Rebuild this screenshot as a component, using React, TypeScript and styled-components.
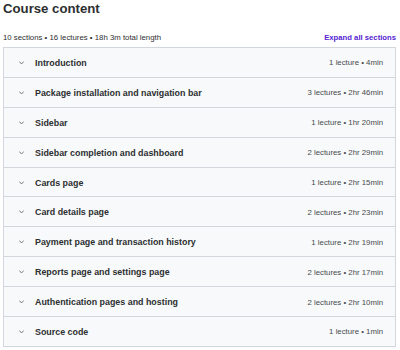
import React from 'react';
import styled, {createGlobalStyle} from 'styled-components';

const GlobalStyle = createGlobalStyle`
  html, body {
    margin: 0;
    padding: 0;
    background: #ffffff;
  }
  body {
    font-family: 'Liberation Sans', Arial, sans-serif;
    color: #2d2f31;
  }
`;

type Section = {
  title: string;
  lectures: number;
  length: string;
};

const sections: Section[] = [
  {title: 'Introduction', lectures: 1, length: '4min'},
  {title: 'Package installation and navigation bar', lectures: 3, length: '2hr 46min'},
  {title: 'Sidebar', lectures: 1, length: '1hr 20min'},
  {title: 'Sidebar completion and dashboard', lectures: 2, length: '2hr 29min'},
  {title: 'Cards page', lectures: 1, length: '2hr 15min'},
  {title: 'Card details page', lectures: 2, length: '2hr 23min'},
  {title: 'Payment page and transaction history', lectures: 1, length: '2hr 19min'},
  {title: 'Reports page and settings page', lectures: 2, length: '2hr 17min'},
  {title: 'Authentication pages and hosting', lectures: 2, length: '2hr 10min'},
  {title: 'Source code', lectures: 1, length: '1min'},
];

export default function App() {
  return (
    <Page>
      <GlobalStyle />
      <Title>Course content</Title>
      <SummaryBar>
        <Summary>10 sections • 16 lectures • 18h 3m total length</Summary>
        <ExpandButton>Expand all sections</ExpandButton>
      </SummaryBar>
      <Panel>
        {sections.map(s => (
          <SectionRow key={s.title}>
            <Chevron width="5" height="4" viewBox="0 0 5 4">
              <polyline points="0.5,0.8 2.5,3 4.5,0.8" />
            </Chevron>
            <SectionTitle>{s.title}</SectionTitle>
            <SectionMeta>
              {s.lectures} {s.lectures === 1 ? 'lecture' : 'lectures'} • {s.length}
            </SectionMeta>
          </SectionRow>
        ))}
      </Panel>
    </Page>
  );
}

const Page = styled.div`
  width: 400px;
  padding: 0 4px 0 3px;
  box-sizing: border-box;
`;

const Title = styled.h2`
  margin: 0;
  padding-top: 1px;
  font-size: 13.2px;
  line-height: 16px;
  font-weight: 700;
  color: #2d2f31;
`;

const SummaryBar = styled.div`
  display: flex;
  align-items: center;
  justify-content: space-between;
  margin-top: 12px;
  height: 16px;
  margin-bottom: 2px;
`;

const Summary = styled.span`
  font-size: 7.8px;
  color: #2d2f31;
`;

const ExpandButton = styled.span`
  font-size: 7.7px;
  font-weight: 700;
  color: #5624d0;
`;

const Panel = styled.div`
  border: 1px solid #d1d7dc;
  border-bottom: none;
  background: #f7f9fa;
`;

const SectionRow = styled.div`
  display: flex;
  align-items: center;
  height: 29.9px;
  box-sizing: border-box;
  border-bottom: 1px solid #d1d7dc;
  padding: 1px 12px 0 15px;
`;

const Chevron = styled.svg`
  flex: none;
  fill: none;
  stroke: #6a6f73;
  stroke-width: 0.9;
  stroke-linecap: round;
  stroke-linejoin: round;
  margin-right: 11px;
`;

const SectionTitle = styled.span`
  flex: 1;
  font-size: 8.9px;
  font-weight: 700;
  color: #2d2f31;
  white-space: nowrap;
`;

const SectionMeta = styled.span`
  font-size: 7.8px;
  color: #484b4e;
  white-space: nowrap;
`;
